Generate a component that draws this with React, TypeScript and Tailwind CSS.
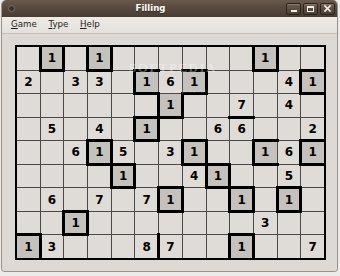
import React from "react";

const ROWS = [
  "0101000000100",
  "2033016100041",
  "0000001007040",
  "0504010066002",
  "0061503100161",
  "0000100410050",
  "0607071001010",
  "0010000000300",
  "1300087001007",
];
const W = 13;
const H = 9;
const val = (r: number, c: number) => Number(ROWS[r][c]);

// v r-c : edge between (r,c) and (r,c+1); h r-c : edge between (r,c) and (r+1,c)
const THIN = new Set(["v1-5", "v1-6", "h1-6", "v4-10", "h4-11"]);

function thick(a: number, b: number, key: string) {
  if (THIN.has(key)) return false;
  if (a === b) return false;
  if (a === 1 || b === 1) return true;
  return a !== 0 && b !== 0;
}

function Cell({ r, c }: { r: number; c: number }) {
  const v = val(r, c);
  const L = c > 0 && thick(val(r, c - 1), v, `v${r}-${c - 1}`);
  const R = c < W - 1 && thick(v, val(r, c + 1), `v${r}-${c}`);
  const T = r > 0 && thick(val(r - 1, c), v, `h${r - 1}-${c}`);
  const B = r < H - 1 && thick(v, val(r + 1, c), `h${r}-${c}`);
  return (
    <div
      className={
        v === 1
          ? "relative flex items-center justify-center bg-[#c5c2bd]"
          : "relative flex items-center justify-center bg-[#dfdcd7]"
      }
    >
      {v ? (
        <span className="text-[12px] font-bold leading-none text-black">{v}</span>
      ) : null}
      {L && <div className="absolute left-[-2px] top-[-2px] bottom-[-2px] w-[3px] bg-black z-10" />}
      {R && <div className="absolute right-[-2px] top-[-2px] bottom-[-2px] w-[3px] bg-black z-10" />}
      {T && <div className="absolute top-[-2px] left-[-2px] right-[-2px] h-[3px] bg-black z-10" />}
      {B && <div className="absolute bottom-[-2px] left-[-2px] right-[-2px] h-[3px] bg-black z-10" />}
    </div>
  );
}

function TitleButton({ children }: { children: React.ReactNode }) {
  return (
    <div className="w-[15px] h-[12px] rounded-[2px] border border-[#2a221d] bg-linear-to-b from-[#6f5f52] to-[#4a3e35] flex items-center justify-center shadow-[inset_0_1px_0_rgba(255,255,255,0.18)]">
      {children}
    </div>
  );
}

export default function App() {
  return (
    <div className="w-[340px] h-[276px] bg-[#edebe9] overflow-hidden font-['DejaVu_Sans',sans-serif]">
      <div className="ml-[1px] w-[337px] h-[272px] flex flex-col rounded-t-[5px] rounded-b-[4px] border-x border-b border-[#9b9389] bg-[#dedbd6] overflow-hidden">
        {/* Title bar */}
        <div className="h-[17px] shrink-0 flex items-center bg-linear-to-b from-[#6a5a4d] via-[#56483d] to-[#483c33] rounded-t-[4px]">
          <div className="ml-[6px] w-[7px] h-[7px] rounded-full bg-[#3a322d] border border-[#7b6e64]" />
          <div className="flex-1 text-center text-[8.6px] font-bold text-white leading-none [text-shadow:0_1px_0_rgba(0,0,0,0.5)]">
            Filling
          </div>
          <div className="flex gap-[2px] pr-[2px]">
            <TitleButton>
              <div className="w-[6px] h-[2px] bg-[#f2ede7] mt-[5px]" />
            </TitleButton>
            <TitleButton>
              <div className="w-[7px] h-[6px] border border-t-2 border-[#f2ede7]" />
            </TitleButton>
            <TitleButton>
              <svg width="7" height="7" viewBox="0 0 7 7">
                <path d="M1 1L6 6M6 1L1 6" stroke="#f2ede7" strokeWidth="1.7" strokeLinecap="square" />
              </svg>
            </TitleButton>
          </div>
        </div>
        {/* Menu bar */}
        <div className="h-[17px] shrink-0 flex items-center gap-[11.6px] pl-[9px] pb-[1px] text-[8.7px] text-[#1e1b18] bg-linear-to-b from-[#efece8] to-[#e4e0db] border-b border-[#c7c0b7]">
          <span>
            <span className="underline underline-offset-[1px]">G</span>ame
          </span>
          <span>
            <span className="underline underline-offset-[1px]">T</span>ype
          </span>
          <span>
            <span className="underline underline-offset-[1px]">H</span>elp
          </span>
        </div>
        {/* Content */}
        <div className="flex-1 pl-[13px] pt-[11px] bg-[#dddad5]">
          <div className="relative w-[311px] h-[215px] border-2 border-black bg-[#4a4a4a] grid grid-cols-[repeat(13,minmax(0,1fr))] grid-rows-[repeat(9,minmax(0,1fr))] gap-px">
            {ROWS.map((row, r) =>
              row.split("").map((_, c) => <Cell key={`${r}-${c}`} r={r} c={c} />)
            )}
            <div className="absolute left-[112px] top-[14px] z-20 text-[13px] leading-none font-bold tracking-[1.5px] text-white/35 font-['Liberation_Serif',serif] pointer-events-none">
              SOFTPEDIA
            </div>
            <div className="absolute left-[142px] top-[42px] z-20 text-[5px] leading-none text-white/30 pointer-events-none">
              www.softpedia.com
            </div>
          </div>
        </div>
      </div>
    </div>
  );
}
